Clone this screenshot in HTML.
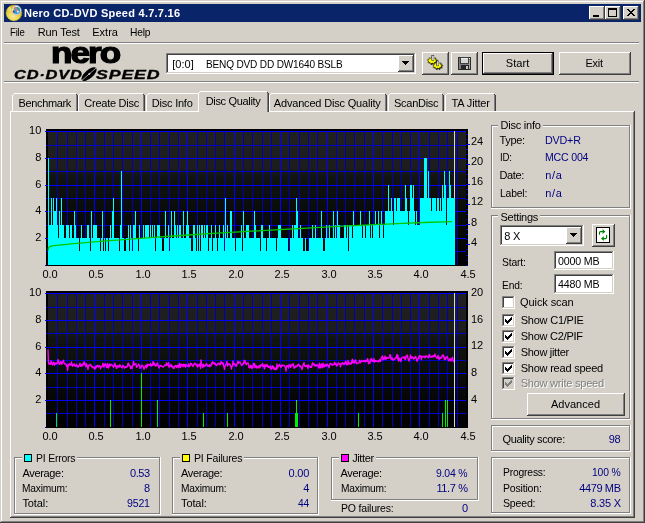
<!DOCTYPE html>
<html><head><meta charset="utf-8"><title>Nero CD-DVD Speed 4.7.7.16</title>
<style>
html,body{margin:0;padding:0;background:#d4d0c8;}
body{width:645px;height:523px;position:relative;overflow:hidden;font-family:"Liberation Sans",sans-serif;font-size:11px;}
#w{position:absolute;left:0;top:0;width:645px;height:523px;overflow:hidden;}
#w div,#w span,#w svg,#tx span{position:absolute;}
#tx{position:absolute;left:0;top:0;width:645px;height:523px;overflow:hidden;will-change:transform;}
.t{font:11px/13px "Liberation Sans",sans-serif;white-space:nowrap;}
.logo1{font:bold 29px/30px "Liberation Sans",sans-serif;letter-spacing:-1.6px;color:#000;-webkit-text-stroke:1.2px #000;transform-origin:0 0;transform:scaleX(1.21);white-space:nowrap;}
.logo2{font:italic bold 12.5px/16px "Liberation Sans",sans-serif;color:#000;transform-origin:0 0;letter-spacing:0.6px;-webkit-text-stroke:0.35px #000;white-space:nowrap;}
</style></head><body><div id="w">
<div style="left:0px;top:0px;width:645px;height:523px;background:#d4d0c8;"></div>
<div style="left:0px;top:0px;width:645px;height:1px;background:#d4d0c8;"></div>
<div style="left:0px;top:0px;width:1px;height:523px;background:#d4d0c8;"></div>
<div style="left:1px;top:1px;width:643px;height:1px;background:#fff;"></div>
<div style="left:1px;top:1px;width:1px;height:521px;background:#fff;"></div>
<div style="left:0px;top:522px;width:645px;height:1px;background:#404040;"></div>
<div style="left:644px;top:0px;width:1px;height:523px;background:#404040;"></div>
<div style="left:1px;top:521px;width:643px;height:1px;background:#808080;"></div>
<div style="left:643px;top:1px;width:1px;height:521px;background:#808080;"></div>
<div style="left:4px;top:4px;width:637px;height:18px;background:#0a246a;"></div>
<svg style="left:4px;top:4px" width="20" height="18" viewBox="4 4 20 18">
<defs><radialGradient id="gd" cx="0.45" cy="0.7" r="0.7"><stop offset="0" stop-color="#f6eaa8"/><stop offset="0.45" stop-color="#ecd848"/><stop offset="1" stop-color="#d0b420"/></radialGradient></defs>
<circle cx="13.9" cy="13" r="7.9" fill="url(#gd)" stroke="#c8ac20" stroke-width="0.6" stroke-dasharray="1.2 0.9"/>
<path d="M13.9 13 L7 9.5 A7.8 7.8 0 0 1 10 6.3 Z" fill="#f4e870" opacity="0.7"/>
<circle cx="16.4" cy="10.2" r="4.7" fill="#e4e4f0" stroke="#a8a8bc" stroke-width="0.6"/>
<circle cx="16.6" cy="10.4" r="3.5" fill="#2c9ee6"/>
<path d="M17.2 7 L19.6 8.2 L18.6 9.4 Z" fill="#30a030"/>
<path d="M13.2 10.2 L15 12.6 L13.8 13 L12.8 11.6 Z" fill="#a01818"/>
<path d="M15 7.4 L17.6 11.8" stroke="#ff7040" stroke-width="1.5" fill="none" stroke-linecap="round"/>
<circle cx="13.4" cy="9.4" r="0.8" fill="#f8e020"/>
<circle cx="17.9" cy="11.6" r="0.9" fill="#fff"/>
</svg>
<div style="left:589px;top:6px;width:16px;height:14px;background:#d4d0c8;"></div>
<div style="left:589px;top:6px;width:15px;height:1px;background:#fff;"></div>
<div style="left:589px;top:6px;width:1px;height:13px;background:#fff;"></div>
<div style="left:589px;top:19px;width:16px;height:1px;background:#404040;"></div>
<div style="left:604px;top:6px;width:1px;height:14px;background:#404040;"></div>
<div style="left:590px;top:18px;width:14px;height:1px;background:#808080;"></div>
<div style="left:603px;top:7px;width:1px;height:12px;background:#808080;"></div>
<div style="left:605px;top:6px;width:16px;height:14px;background:#d4d0c8;"></div>
<div style="left:605px;top:6px;width:15px;height:1px;background:#fff;"></div>
<div style="left:605px;top:6px;width:1px;height:13px;background:#fff;"></div>
<div style="left:605px;top:19px;width:16px;height:1px;background:#404040;"></div>
<div style="left:620px;top:6px;width:1px;height:14px;background:#404040;"></div>
<div style="left:606px;top:18px;width:14px;height:1px;background:#808080;"></div>
<div style="left:619px;top:7px;width:1px;height:12px;background:#808080;"></div>
<div style="left:623px;top:6px;width:16px;height:14px;background:#d4d0c8;"></div>
<div style="left:623px;top:6px;width:15px;height:1px;background:#fff;"></div>
<div style="left:623px;top:6px;width:1px;height:13px;background:#fff;"></div>
<div style="left:623px;top:19px;width:16px;height:1px;background:#404040;"></div>
<div style="left:638px;top:6px;width:1px;height:14px;background:#404040;"></div>
<div style="left:624px;top:18px;width:14px;height:1px;background:#808080;"></div>
<div style="left:637px;top:7px;width:1px;height:12px;background:#808080;"></div>
<div style="left:593px;top:15px;width:6px;height:2px;background:#000;"></div>
<div style="left:608px;top:8px;width:9px;height:9px;background:#000;"></div>
<div style="left:609px;top:10px;width:7px;height:6px;background:#d4d0c8;"></div>
<svg style="left:623px;top:6px" width="16" height="14" viewBox="0 0 16 14" shape-rendering="crispEdges">
<path d="M4 3h2v1h1v1h2v-1h1v-1h2v1h-1v1h-1v1h-1v1h1v1h1v1h1v1h-2v-1h-1v-1h-2v1h-1v1h-2v-1h1v-1h1v-1h1v-1h-1v-1h-1v-1h-1z" fill="#000"/></svg>
<div style="left:4px;top:42px;width:635px;height:1px;background:#808080;"></div>
<div style="left:4px;top:43px;width:635px;height:1px;background:#fff;"></div>
<svg style="left:78px;top:64px" width="22" height="20" viewBox="78 64 22 20">
<g transform="translate(0.6 0) rotate(-41 88.5 74.1)">
<ellipse cx="88.5" cy="74.1" rx="9.4" ry="4.1" fill="#000"/>
<path d="M78.2 74.1 H98.8" stroke="#d4d0c8" stroke-width="0.7" fill="none"/>
<ellipse cx="88.8" cy="74.1" rx="1.3" ry="0.8" fill="#d4d0c8"/>
</g>
</svg>
<div style="left:166px;top:53px;width:250px;height:21px;background:#fff;"></div>
<div style="left:166px;top:53px;width:250px;height:1px;background:#808080;"></div>
<div style="left:166px;top:53px;width:1px;height:21px;background:#808080;"></div>
<div style="left:167px;top:54px;width:248px;height:1px;background:#404040;"></div>
<div style="left:167px;top:54px;width:1px;height:19px;background:#404040;"></div>
<div style="left:166px;top:73px;width:250px;height:1px;background:#fff;"></div>
<div style="left:415px;top:53px;width:1px;height:21px;background:#fff;"></div>
<div style="left:167px;top:72px;width:248px;height:1px;background:#d4d0c8;"></div>
<div style="left:414px;top:54px;width:1px;height:19px;background:#d4d0c8;"></div>
<div style="left:398px;top:55px;width:16px;height:17px;background:#d4d0c8;"></div>
<div style="left:398px;top:55px;width:15px;height:1px;background:#fff;"></div>
<div style="left:398px;top:55px;width:1px;height:16px;background:#fff;"></div>
<div style="left:398px;top:71px;width:16px;height:1px;background:#404040;"></div>
<div style="left:413px;top:55px;width:1px;height:17px;background:#404040;"></div>
<div style="left:399px;top:70px;width:14px;height:1px;background:#808080;"></div>
<div style="left:412px;top:56px;width:1px;height:15px;background:#808080;"></div>
<div style="left:402px;top:61px;width:7px;height:1px;background:#000;"></div>
<div style="left:403px;top:62px;width:5px;height:1px;background:#000;"></div>
<div style="left:404px;top:63px;width:3px;height:1px;background:#000;"></div>
<div style="left:405px;top:64px;width:1px;height:1px;background:#000;"></div>
<div style="left:422px;top:52px;width:27px;height:23px;background:#d4d0c8;"></div>
<div style="left:422px;top:52px;width:26px;height:1px;background:#fff;"></div>
<div style="left:422px;top:52px;width:1px;height:22px;background:#fff;"></div>
<div style="left:422px;top:74px;width:27px;height:1px;background:#404040;"></div>
<div style="left:448px;top:52px;width:1px;height:23px;background:#404040;"></div>
<div style="left:423px;top:73px;width:25px;height:1px;background:#808080;"></div>
<div style="left:447px;top:53px;width:1px;height:21px;background:#808080;"></div>
<div style="left:451px;top:52px;width:27px;height:23px;background:#d4d0c8;"></div>
<div style="left:451px;top:52px;width:26px;height:1px;background:#fff;"></div>
<div style="left:451px;top:52px;width:1px;height:22px;background:#fff;"></div>
<div style="left:451px;top:74px;width:27px;height:1px;background:#404040;"></div>
<div style="left:477px;top:52px;width:1px;height:23px;background:#404040;"></div>
<div style="left:452px;top:73px;width:25px;height:1px;background:#808080;"></div>
<div style="left:476px;top:53px;width:1px;height:21px;background:#808080;"></div>
<svg style="left:424px;top:52px" width="24" height="22" viewBox="424 52 24 22">
<path d="M432.90 57.40 L434.13 58.81 L436.31 58.31 L436.02 59.97 L438.12 60.62 L436.45 61.76 L437.49 63.25 L435.22 63.33 L434.71 64.96 L432.90 63.95 L431.09 64.96 L430.58 63.33 L428.31 63.25 L429.35 61.76 L427.68 60.62 L429.78 59.97 L429.49 58.31 L431.67 58.81 Z" fill="#000"/>
<path d="M432.20 56.90 L433.39 58.24 L435.48 57.77 L435.20 59.34 L437.22 59.96 L435.62 61.04 L436.62 62.45 L434.43 62.53 L433.94 64.08 L432.20 63.12 L430.46 64.08 L429.97 62.53 L427.78 62.45 L428.78 61.04 L427.18 59.96 L429.20 59.34 L428.92 57.77 L431.01 58.24 Z" fill="#ffff00" stroke="#1a1a00" stroke-width="0.55"/>
<rect x="431.8" y="55.4" width="2.0" height="5.200000000000003" fill="#b8b8cc" stroke="#202028" stroke-width="0.6"/>
<rect x="432.6" y="55.8" width="0.9" height="4.600000000000003" fill="#f4f4ff"/>
<path d="M438.20 62.40 L439.43 63.81 L441.61 63.31 L441.32 64.97 L443.42 65.62 L441.75 66.76 L442.79 68.25 L440.52 68.33 L440.01 69.96 L438.20 68.95 L436.39 69.96 L435.88 68.33 L433.61 68.25 L434.65 66.76 L432.98 65.62 L435.08 64.97 L434.79 63.31 L436.97 63.81 Z" fill="#000"/>
<path d="M437.50 61.90 L438.69 63.24 L440.78 62.77 L440.50 64.34 L442.52 64.96 L440.92 66.04 L441.92 67.45 L439.73 67.53 L439.24 69.08 L437.50 68.12 L435.76 69.08 L435.27 67.53 L433.08 67.45 L434.08 66.04 L432.48 64.96 L434.50 64.34 L434.22 62.77 L436.31 63.24 Z" fill="#ffff00" stroke="#1a1a00" stroke-width="0.55"/>
<rect x="436.7" y="61.0" width="2.0" height="4.799999999999997" fill="#b8b8cc" stroke="#202028" stroke-width="0.6"/>
<rect x="437.5" y="61.4" width="0.9" height="4.1999999999999975" fill="#f4f4ff"/>
</svg>
<svg style="left:458px;top:57px" width="13" height="13" viewBox="458 57 13 13" shape-rendering="crispEdges">
<rect x="458" y="57" width="13" height="13" fill="#2c2c2c"/>
<rect x="459" y="58" width="11" height="11" fill="#7c7c7c"/>
<rect x="460" y="57" width="9" height="7" fill="#404040"/>
<rect x="461" y="58" width="7" height="5" fill="#d6d6d6"/>
<rect x="461" y="58" width="7" height="1" fill="#ececec"/>
<rect x="461" y="65" width="8" height="5" fill="#262626"/>
<rect x="466" y="66" width="2" height="3" fill="#c4c4c4"/>
<rect x="469" y="60" width="1" height="9" fill="#a8a8a8"/>
<rect x="469" y="58" width="1" height="1" fill="#fff"/>
</svg>
<div style="left:482px;top:52px;width:72px;height:23px;background:#000;"></div>
<div style="left:483px;top:53px;width:70px;height:21px;background:#d4d0c8;"></div>
<div style="left:483px;top:53px;width:69px;height:1px;background:#fff;"></div>
<div style="left:483px;top:53px;width:1px;height:20px;background:#fff;"></div>
<div style="left:483px;top:73px;width:70px;height:1px;background:#404040;"></div>
<div style="left:552px;top:53px;width:1px;height:21px;background:#404040;"></div>
<div style="left:484px;top:72px;width:68px;height:1px;background:#808080;"></div>
<div style="left:551px;top:54px;width:1px;height:19px;background:#808080;"></div>
<div style="left:559px;top:52px;width:72px;height:23px;background:#d4d0c8;"></div>
<div style="left:559px;top:52px;width:71px;height:1px;background:#fff;"></div>
<div style="left:559px;top:52px;width:1px;height:22px;background:#fff;"></div>
<div style="left:559px;top:74px;width:72px;height:1px;background:#404040;"></div>
<div style="left:630px;top:52px;width:1px;height:23px;background:#404040;"></div>
<div style="left:560px;top:73px;width:70px;height:1px;background:#808080;"></div>
<div style="left:629px;top:53px;width:1px;height:21px;background:#808080;"></div>
<div style="left:4px;top:81px;width:635px;height:1px;background:#808080;"></div>
<div style="left:4px;top:82px;width:635px;height:1px;background:#fff;"></div>
<div style="left:10px;top:111px;width:624px;height:1px;background:#fff;"></div>
<div style="left:10px;top:111px;width:1px;height:406px;background:#fff;"></div>
<div style="left:10px;top:517px;width:625px;height:1px;background:#404040;"></div>
<div style="left:634px;top:111px;width:1px;height:407px;background:#404040;"></div>
<div style="left:11px;top:516px;width:623px;height:1px;background:#808080;"></div>
<div style="left:633px;top:112px;width:1px;height:405px;background:#808080;"></div>
<div style="left:12px;top:93px;width:66px;height:18px;background:#d4d0c8;"></div>
<div style="left:12px;top:95px;width:1px;height:16px;background:#fff;"></div>
<div style="left:13px;top:94px;width:1px;height:1px;background:#fff;"></div>
<div style="left:14px;top:93px;width:62px;height:1px;background:#fff;"></div>
<div style="left:77px;top:95px;width:1px;height:16px;background:#404040;"></div>
<div style="left:76px;top:94px;width:1px;height:1px;background:#404040;"></div>
<div style="left:76px;top:95px;width:1px;height:16px;background:#808080;"></div>
<div style="left:78px;top:93px;width:67px;height:18px;background:#d4d0c8;"></div>
<div style="left:78px;top:95px;width:1px;height:16px;background:#fff;"></div>
<div style="left:79px;top:94px;width:1px;height:1px;background:#fff;"></div>
<div style="left:80px;top:93px;width:63px;height:1px;background:#fff;"></div>
<div style="left:144px;top:95px;width:1px;height:16px;background:#404040;"></div>
<div style="left:143px;top:94px;width:1px;height:1px;background:#404040;"></div>
<div style="left:143px;top:95px;width:1px;height:16px;background:#808080;"></div>
<div style="left:146px;top:93px;width:54px;height:18px;background:#d4d0c8;"></div>
<div style="left:146px;top:95px;width:1px;height:16px;background:#fff;"></div>
<div style="left:147px;top:94px;width:1px;height:1px;background:#fff;"></div>
<div style="left:148px;top:93px;width:50px;height:1px;background:#fff;"></div>
<div style="left:199px;top:95px;width:1px;height:16px;background:#404040;"></div>
<div style="left:198px;top:94px;width:1px;height:1px;background:#404040;"></div>
<div style="left:198px;top:95px;width:1px;height:16px;background:#808080;"></div>
<div style="left:269px;top:93px;width:118px;height:18px;background:#d4d0c8;"></div>
<div style="left:269px;top:95px;width:1px;height:16px;background:#fff;"></div>
<div style="left:270px;top:94px;width:1px;height:1px;background:#fff;"></div>
<div style="left:271px;top:93px;width:114px;height:1px;background:#fff;"></div>
<div style="left:386px;top:95px;width:1px;height:16px;background:#404040;"></div>
<div style="left:385px;top:94px;width:1px;height:1px;background:#404040;"></div>
<div style="left:385px;top:95px;width:1px;height:16px;background:#808080;"></div>
<div style="left:388px;top:93px;width:56px;height:18px;background:#d4d0c8;"></div>
<div style="left:388px;top:95px;width:1px;height:16px;background:#fff;"></div>
<div style="left:389px;top:94px;width:1px;height:1px;background:#fff;"></div>
<div style="left:390px;top:93px;width:52px;height:1px;background:#fff;"></div>
<div style="left:443px;top:95px;width:1px;height:16px;background:#404040;"></div>
<div style="left:442px;top:94px;width:1px;height:1px;background:#404040;"></div>
<div style="left:442px;top:95px;width:1px;height:16px;background:#808080;"></div>
<div style="left:445px;top:93px;width:51px;height:18px;background:#d4d0c8;"></div>
<div style="left:445px;top:95px;width:1px;height:16px;background:#fff;"></div>
<div style="left:446px;top:94px;width:1px;height:1px;background:#fff;"></div>
<div style="left:447px;top:93px;width:47px;height:1px;background:#fff;"></div>
<div style="left:495px;top:95px;width:1px;height:16px;background:#404040;"></div>
<div style="left:494px;top:94px;width:1px;height:1px;background:#404040;"></div>
<div style="left:494px;top:95px;width:1px;height:16px;background:#808080;"></div>
<div style="left:198px;top:91px;width:71px;height:21px;background:#d4d0c8;"></div>
<div style="left:198px;top:93px;width:1px;height:19px;background:#fff;"></div>
<div style="left:199px;top:92px;width:1px;height:1px;background:#fff;"></div>
<div style="left:200px;top:91px;width:67px;height:1px;background:#fff;"></div>
<div style="left:268px;top:93px;width:1px;height:19px;background:#404040;"></div>
<div style="left:267px;top:92px;width:1px;height:1px;background:#404040;"></div>
<div style="left:267px;top:93px;width:1px;height:19px;background:#808080;"></div>
<svg style="left:26px;top:123px" width="462" height="160" viewBox="26 123 462 160" shape-rendering="crispEdges">
<defs><linearGradient id="bg1" x1="0" y1="0" x2="0" y2="1"><stop offset="0" stop-color="#212121"/><stop offset="0.28" stop-color="#1c1d1c"/><stop offset="0.34" stop-color="#111411"/><stop offset="0.6" stop-color="#0a0c0a"/><stop offset="0.85" stop-color="#040504"/><stop offset="1" stop-color="#000"/></linearGradient></defs>
<rect x="46" y="129" width="422" height="136" fill="#000"/>
<rect x="48" y="131" width="418" height="133" fill="url(#bg1)"/>
<rect x="57" y="131" width="1" height="134" fill="#0000b8"/>
<rect x="67" y="131" width="1" height="134" fill="#0000b8"/>
<rect x="76" y="131" width="1" height="134" fill="#0000b8"/>
<rect x="85" y="131" width="1" height="134" fill="#0000b8"/>
<rect x="94" y="131" width="1" height="134" fill="#0000ff"/>
<rect x="104" y="131" width="1" height="134" fill="#0000b8"/>
<rect x="113" y="131" width="1" height="134" fill="#0000b8"/>
<rect x="122" y="131" width="1" height="134" fill="#0000b8"/>
<rect x="132" y="131" width="1" height="134" fill="#0000b8"/>
<rect x="141" y="131" width="1" height="134" fill="#0000ff"/>
<rect x="150" y="131" width="1" height="134" fill="#0000b8"/>
<rect x="159" y="131" width="1" height="134" fill="#0000b8"/>
<rect x="169" y="131" width="1" height="134" fill="#0000b8"/>
<rect x="178" y="131" width="1" height="134" fill="#0000b8"/>
<rect x="187" y="131" width="1" height="134" fill="#0000ff"/>
<rect x="197" y="131" width="1" height="134" fill="#0000b8"/>
<rect x="206" y="131" width="1" height="134" fill="#0000b8"/>
<rect x="215" y="131" width="1" height="134" fill="#0000b8"/>
<rect x="224" y="131" width="1" height="134" fill="#0000b8"/>
<rect x="234" y="131" width="1" height="134" fill="#0000ff"/>
<rect x="243" y="131" width="1" height="134" fill="#0000b8"/>
<rect x="252" y="131" width="1" height="134" fill="#0000b8"/>
<rect x="262" y="131" width="1" height="134" fill="#0000b8"/>
<rect x="271" y="131" width="1" height="134" fill="#0000b8"/>
<rect x="280" y="131" width="1" height="134" fill="#0000ff"/>
<rect x="289" y="131" width="1" height="134" fill="#0000b8"/>
<rect x="299" y="131" width="1" height="134" fill="#0000b8"/>
<rect x="308" y="131" width="1" height="134" fill="#0000b8"/>
<rect x="317" y="131" width="1" height="134" fill="#0000b8"/>
<rect x="327" y="131" width="1" height="134" fill="#0000ff"/>
<rect x="336" y="131" width="1" height="134" fill="#0000b8"/>
<rect x="345" y="131" width="1" height="134" fill="#0000b8"/>
<rect x="354" y="131" width="1" height="134" fill="#0000b8"/>
<rect x="364" y="131" width="1" height="134" fill="#0000b8"/>
<rect x="373" y="131" width="1" height="134" fill="#0000ff"/>
<rect x="382" y="131" width="1" height="134" fill="#0000b8"/>
<rect x="392" y="131" width="1" height="134" fill="#0000b8"/>
<rect x="401" y="131" width="1" height="134" fill="#0000b8"/>
<rect x="410" y="131" width="1" height="134" fill="#0000b8"/>
<rect x="419" y="131" width="1" height="134" fill="#0000ff"/>
<rect x="429" y="131" width="1" height="134" fill="#0000b8"/>
<rect x="438" y="131" width="1" height="134" fill="#0000b8"/>
<rect x="447" y="131" width="1" height="134" fill="#0000b8"/>
<rect x="457" y="131" width="1" height="134" fill="#0000b8"/>
<rect x="45" y="265" width="421" height="1" fill="#0000ff"/>
<rect x="46" y="251" width="420" height="1" fill="#0000c8"/>
<rect x="45" y="238" width="421" height="1" fill="#0000ff"/>
<rect x="46" y="225" width="420" height="1" fill="#0000c8"/>
<rect x="45" y="211" width="421" height="1" fill="#0000ff"/>
<rect x="46" y="198" width="420" height="1" fill="#0000c8"/>
<rect x="45" y="185" width="421" height="1" fill="#0000ff"/>
<rect x="46" y="171" width="420" height="1" fill="#0000c8"/>
<rect x="45" y="158" width="421" height="1" fill="#0000ff"/>
<rect x="46" y="145" width="420" height="1" fill="#0000c8"/>
<rect x="45" y="131" width="421" height="1" fill="#0000ff"/>
<rect x="454" y="131" width="1" height="134" fill="#d8d8d8"/>
<rect x="48" y="158" width="1" height="107" fill="#00ffff"/>
<rect x="49" y="225" width="2" height="40" fill="#00ffff"/>
<rect x="51" y="198" width="1" height="67" fill="#00ffff"/>
<rect x="52" y="225" width="1" height="40" fill="#00ffff"/>
<rect x="53" y="198" width="1" height="67" fill="#00ffff"/>
<rect x="54" y="211" width="2" height="54" fill="#00ffff"/>
<rect x="56" y="198" width="1" height="67" fill="#00ffff"/>
<rect x="57" y="225" width="1" height="40" fill="#00ffff"/>
<rect x="58" y="238" width="1" height="27" fill="#00ffff"/>
<rect x="59" y="211" width="1" height="54" fill="#00ffff"/>
<rect x="60" y="225" width="1" height="40" fill="#00ffff"/>
<rect x="61" y="198" width="1" height="67" fill="#00ffff"/>
<rect x="62" y="225" width="2" height="40" fill="#00ffff"/>
<rect x="64" y="238" width="2" height="27" fill="#00ffff"/>
<rect x="66" y="225" width="3" height="40" fill="#00ffff"/>
<rect x="69" y="238" width="1" height="27" fill="#00ffff"/>
<rect x="70" y="225" width="2" height="40" fill="#00ffff"/>
<rect x="72" y="238" width="2" height="27" fill="#00ffff"/>
<rect x="74" y="211" width="1" height="54" fill="#00ffff"/>
<rect x="75" y="225" width="1" height="40" fill="#00ffff"/>
<rect x="76" y="238" width="3" height="27" fill="#00ffff"/>
<rect x="79" y="251" width="1" height="14" fill="#00ffff"/>
<rect x="80" y="238" width="1" height="27" fill="#00ffff"/>
<rect x="81" y="225" width="1" height="40" fill="#00ffff"/>
<rect x="82" y="238" width="5" height="27" fill="#00ffff"/>
<rect x="87" y="225" width="2" height="40" fill="#00ffff"/>
<rect x="89" y="238" width="1" height="27" fill="#00ffff"/>
<rect x="90" y="251" width="1" height="14" fill="#00ffff"/>
<rect x="91" y="211" width="1" height="54" fill="#00ffff"/>
<rect x="92" y="238" width="1" height="27" fill="#00ffff"/>
<rect x="93" y="225" width="4" height="40" fill="#00ffff"/>
<rect x="97" y="238" width="3" height="27" fill="#00ffff"/>
<rect x="100" y="251" width="1" height="14" fill="#00ffff"/>
<rect x="101" y="238" width="1" height="27" fill="#00ffff"/>
<rect x="102" y="211" width="1" height="54" fill="#00ffff"/>
<rect x="103" y="251" width="1" height="14" fill="#00ffff"/>
<rect x="104" y="238" width="1" height="27" fill="#00ffff"/>
<rect x="105" y="251" width="1" height="14" fill="#00ffff"/>
<rect x="106" y="238" width="2" height="27" fill="#00ffff"/>
<rect x="108" y="251" width="1" height="14" fill="#00ffff"/>
<rect x="109" y="238" width="1" height="27" fill="#00ffff"/>
<rect x="110" y="225" width="1" height="40" fill="#00ffff"/>
<rect x="111" y="238" width="1" height="27" fill="#00ffff"/>
<rect x="112" y="211" width="1" height="54" fill="#00ffff"/>
<rect x="113" y="198" width="1" height="67" fill="#00ffff"/>
<rect x="114" y="238" width="5" height="27" fill="#00ffff"/>
<rect x="119" y="251" width="1" height="14" fill="#00ffff"/>
<rect x="120" y="225" width="1" height="40" fill="#00ffff"/>
<rect x="121" y="171" width="1" height="94" fill="#00ffff"/>
<rect x="122" y="238" width="2" height="27" fill="#00ffff"/>
<rect x="124" y="251" width="2" height="14" fill="#00ffff"/>
<rect x="126" y="238" width="2" height="27" fill="#00ffff"/>
<rect x="128" y="225" width="1" height="40" fill="#00ffff"/>
<rect x="129" y="251" width="1" height="14" fill="#00ffff"/>
<rect x="130" y="225" width="1" height="40" fill="#00ffff"/>
<rect x="131" y="238" width="1" height="27" fill="#00ffff"/>
<rect x="132" y="251" width="1" height="14" fill="#00ffff"/>
<rect x="133" y="225" width="2" height="40" fill="#00ffff"/>
<rect x="135" y="211" width="1" height="54" fill="#00ffff"/>
<rect x="136" y="238" width="2" height="27" fill="#00ffff"/>
<rect x="138" y="251" width="1" height="14" fill="#00ffff"/>
<rect x="139" y="225" width="1" height="40" fill="#00ffff"/>
<rect x="140" y="238" width="3" height="27" fill="#00ffff"/>
<rect x="143" y="225" width="1" height="40" fill="#00ffff"/>
<rect x="144" y="238" width="1" height="27" fill="#00ffff"/>
<rect x="145" y="225" width="4" height="40" fill="#00ffff"/>
<rect x="149" y="238" width="1" height="27" fill="#00ffff"/>
<rect x="150" y="225" width="1" height="40" fill="#00ffff"/>
<rect x="151" y="238" width="1" height="27" fill="#00ffff"/>
<rect x="152" y="225" width="1" height="40" fill="#00ffff"/>
<rect x="153" y="238" width="1" height="27" fill="#00ffff"/>
<rect x="154" y="225" width="1" height="40" fill="#00ffff"/>
<rect x="155" y="251" width="1" height="14" fill="#00ffff"/>
<rect x="156" y="238" width="1" height="27" fill="#00ffff"/>
<rect x="157" y="225" width="3" height="40" fill="#00ffff"/>
<rect x="160" y="238" width="2" height="27" fill="#00ffff"/>
<rect x="162" y="251" width="2" height="14" fill="#00ffff"/>
<rect x="164" y="238" width="1" height="27" fill="#00ffff"/>
<rect x="165" y="211" width="1" height="54" fill="#00ffff"/>
<rect x="166" y="238" width="2" height="27" fill="#00ffff"/>
<rect x="168" y="225" width="1" height="40" fill="#00ffff"/>
<rect x="169" y="251" width="1" height="14" fill="#00ffff"/>
<rect x="170" y="238" width="1" height="27" fill="#00ffff"/>
<rect x="171" y="211" width="1" height="54" fill="#00ffff"/>
<rect x="172" y="238" width="2" height="27" fill="#00ffff"/>
<rect x="174" y="211" width="1" height="54" fill="#00ffff"/>
<rect x="175" y="225" width="1" height="40" fill="#00ffff"/>
<rect x="176" y="238" width="1" height="27" fill="#00ffff"/>
<rect x="177" y="225" width="1" height="40" fill="#00ffff"/>
<rect x="178" y="238" width="1" height="27" fill="#00ffff"/>
<rect x="179" y="225" width="2" height="40" fill="#00ffff"/>
<rect x="181" y="238" width="2" height="27" fill="#00ffff"/>
<rect x="183" y="211" width="1" height="54" fill="#00ffff"/>
<rect x="184" y="238" width="2" height="27" fill="#00ffff"/>
<rect x="186" y="225" width="1" height="40" fill="#00ffff"/>
<rect x="187" y="211" width="1" height="54" fill="#00ffff"/>
<rect x="188" y="225" width="1" height="40" fill="#00ffff"/>
<rect x="189" y="238" width="2" height="27" fill="#00ffff"/>
<rect x="191" y="251" width="2" height="14" fill="#00ffff"/>
<rect x="193" y="225" width="2" height="40" fill="#00ffff"/>
<rect x="195" y="238" width="1" height="27" fill="#00ffff"/>
<rect x="196" y="251" width="1" height="14" fill="#00ffff"/>
<rect x="197" y="225" width="1" height="40" fill="#00ffff"/>
<rect x="198" y="251" width="1" height="14" fill="#00ffff"/>
<rect x="199" y="225" width="1" height="40" fill="#00ffff"/>
<rect x="200" y="251" width="1" height="14" fill="#00ffff"/>
<rect x="201" y="225" width="2" height="40" fill="#00ffff"/>
<rect x="203" y="238" width="1" height="27" fill="#00ffff"/>
<rect x="204" y="225" width="1" height="40" fill="#00ffff"/>
<rect x="205" y="238" width="1" height="27" fill="#00ffff"/>
<rect x="206" y="225" width="2" height="40" fill="#00ffff"/>
<rect x="208" y="251" width="1" height="14" fill="#00ffff"/>
<rect x="209" y="238" width="2" height="27" fill="#00ffff"/>
<rect x="211" y="225" width="1" height="40" fill="#00ffff"/>
<rect x="212" y="251" width="1" height="14" fill="#00ffff"/>
<rect x="213" y="238" width="2" height="27" fill="#00ffff"/>
<rect x="215" y="225" width="1" height="40" fill="#00ffff"/>
<rect x="216" y="238" width="1" height="27" fill="#00ffff"/>
<rect x="217" y="251" width="1" height="14" fill="#00ffff"/>
<rect x="218" y="238" width="1" height="27" fill="#00ffff"/>
<rect x="219" y="225" width="1" height="40" fill="#00ffff"/>
<rect x="220" y="238" width="3" height="27" fill="#00ffff"/>
<rect x="223" y="225" width="1" height="40" fill="#00ffff"/>
<rect x="224" y="251" width="1" height="14" fill="#00ffff"/>
<rect x="225" y="198" width="1" height="67" fill="#00ffff"/>
<rect x="226" y="238" width="1" height="27" fill="#00ffff"/>
<rect x="227" y="225" width="1" height="40" fill="#00ffff"/>
<rect x="228" y="238" width="2" height="27" fill="#00ffff"/>
<rect x="230" y="211" width="2" height="54" fill="#00ffff"/>
<rect x="232" y="238" width="3" height="27" fill="#00ffff"/>
<rect x="235" y="251" width="1" height="14" fill="#00ffff"/>
<rect x="236" y="238" width="5" height="27" fill="#00ffff"/>
<rect x="241" y="225" width="1" height="40" fill="#00ffff"/>
<rect x="242" y="251" width="1" height="14" fill="#00ffff"/>
<rect x="243" y="211" width="1" height="54" fill="#00ffff"/>
<rect x="244" y="238" width="2" height="27" fill="#00ffff"/>
<rect x="246" y="225" width="3" height="40" fill="#00ffff"/>
<rect x="249" y="238" width="5" height="27" fill="#00ffff"/>
<rect x="254" y="211" width="1" height="54" fill="#00ffff"/>
<rect x="255" y="225" width="1" height="40" fill="#00ffff"/>
<rect x="256" y="238" width="4" height="27" fill="#00ffff"/>
<rect x="260" y="251" width="1" height="14" fill="#00ffff"/>
<rect x="261" y="225" width="2" height="40" fill="#00ffff"/>
<rect x="263" y="238" width="3" height="27" fill="#00ffff"/>
<rect x="266" y="251" width="1" height="14" fill="#00ffff"/>
<rect x="267" y="238" width="2" height="27" fill="#00ffff"/>
<rect x="269" y="225" width="1" height="40" fill="#00ffff"/>
<rect x="270" y="238" width="6" height="27" fill="#00ffff"/>
<rect x="276" y="251" width="1" height="14" fill="#00ffff"/>
<rect x="277" y="238" width="1" height="27" fill="#00ffff"/>
<rect x="278" y="225" width="3" height="40" fill="#00ffff"/>
<rect x="281" y="238" width="7" height="27" fill="#00ffff"/>
<rect x="288" y="251" width="2" height="14" fill="#00ffff"/>
<rect x="290" y="238" width="2" height="27" fill="#00ffff"/>
<rect x="292" y="225" width="1" height="40" fill="#00ffff"/>
<rect x="293" y="238" width="1" height="27" fill="#00ffff"/>
<rect x="294" y="225" width="2" height="40" fill="#00ffff"/>
<rect x="296" y="198" width="1" height="67" fill="#00ffff"/>
<rect x="297" y="211" width="1" height="54" fill="#00ffff"/>
<rect x="298" y="238" width="2" height="27" fill="#00ffff"/>
<rect x="300" y="225" width="1" height="40" fill="#00ffff"/>
<rect x="301" y="238" width="2" height="27" fill="#00ffff"/>
<rect x="303" y="251" width="2" height="14" fill="#00ffff"/>
<rect x="305" y="238" width="1" height="27" fill="#00ffff"/>
<rect x="306" y="251" width="3" height="14" fill="#00ffff"/>
<rect x="309" y="238" width="3" height="27" fill="#00ffff"/>
<rect x="312" y="225" width="1" height="40" fill="#00ffff"/>
<rect x="313" y="238" width="2" height="27" fill="#00ffff"/>
<rect x="315" y="225" width="1" height="40" fill="#00ffff"/>
<rect x="316" y="238" width="5" height="27" fill="#00ffff"/>
<rect x="321" y="211" width="1" height="54" fill="#00ffff"/>
<rect x="322" y="238" width="1" height="27" fill="#00ffff"/>
<rect x="323" y="251" width="2" height="14" fill="#00ffff"/>
<rect x="325" y="238" width="1" height="27" fill="#00ffff"/>
<rect x="326" y="225" width="1" height="40" fill="#00ffff"/>
<rect x="327" y="238" width="2" height="27" fill="#00ffff"/>
<rect x="329" y="225" width="1" height="40" fill="#00ffff"/>
<rect x="330" y="238" width="3" height="27" fill="#00ffff"/>
<rect x="333" y="211" width="1" height="54" fill="#00ffff"/>
<rect x="334" y="238" width="1" height="27" fill="#00ffff"/>
<rect x="335" y="225" width="1" height="40" fill="#00ffff"/>
<rect x="336" y="238" width="1" height="27" fill="#00ffff"/>
<rect x="337" y="211" width="1" height="54" fill="#00ffff"/>
<rect x="338" y="225" width="2" height="40" fill="#00ffff"/>
<rect x="340" y="238" width="4" height="27" fill="#00ffff"/>
<rect x="344" y="225" width="2" height="40" fill="#00ffff"/>
<rect x="346" y="238" width="1" height="27" fill="#00ffff"/>
<rect x="347" y="225" width="1" height="40" fill="#00ffff"/>
<rect x="348" y="251" width="1" height="14" fill="#00ffff"/>
<rect x="349" y="225" width="3" height="40" fill="#00ffff"/>
<rect x="352" y="238" width="1" height="27" fill="#00ffff"/>
<rect x="353" y="211" width="1" height="54" fill="#00ffff"/>
<rect x="354" y="225" width="6" height="40" fill="#00ffff"/>
<rect x="360" y="211" width="1" height="54" fill="#00ffff"/>
<rect x="361" y="225" width="1" height="40" fill="#00ffff"/>
<rect x="362" y="238" width="1" height="27" fill="#00ffff"/>
<rect x="363" y="225" width="2" height="40" fill="#00ffff"/>
<rect x="365" y="238" width="1" height="27" fill="#00ffff"/>
<rect x="366" y="225" width="3" height="40" fill="#00ffff"/>
<rect x="369" y="211" width="1" height="54" fill="#00ffff"/>
<rect x="370" y="238" width="1" height="27" fill="#00ffff"/>
<rect x="371" y="225" width="1" height="40" fill="#00ffff"/>
<rect x="372" y="238" width="1" height="27" fill="#00ffff"/>
<rect x="373" y="225" width="2" height="40" fill="#00ffff"/>
<rect x="375" y="211" width="1" height="54" fill="#00ffff"/>
<rect x="376" y="225" width="2" height="40" fill="#00ffff"/>
<rect x="378" y="211" width="1" height="54" fill="#00ffff"/>
<rect x="379" y="238" width="1" height="27" fill="#00ffff"/>
<rect x="380" y="225" width="1" height="40" fill="#00ffff"/>
<rect x="381" y="211" width="1" height="54" fill="#00ffff"/>
<rect x="382" y="225" width="1" height="40" fill="#00ffff"/>
<rect x="383" y="238" width="1" height="27" fill="#00ffff"/>
<rect x="384" y="225" width="1" height="40" fill="#00ffff"/>
<rect x="385" y="211" width="3" height="54" fill="#00ffff"/>
<rect x="388" y="185" width="1" height="80" fill="#00ffff"/>
<rect x="389" y="211" width="2" height="54" fill="#00ffff"/>
<rect x="391" y="198" width="1" height="67" fill="#00ffff"/>
<rect x="392" y="211" width="1" height="54" fill="#00ffff"/>
<rect x="393" y="225" width="1" height="40" fill="#00ffff"/>
<rect x="394" y="198" width="2" height="67" fill="#00ffff"/>
<rect x="396" y="211" width="1" height="54" fill="#00ffff"/>
<rect x="397" y="198" width="3" height="67" fill="#00ffff"/>
<rect x="400" y="211" width="5" height="54" fill="#00ffff"/>
<rect x="405" y="185" width="1" height="80" fill="#00ffff"/>
<rect x="406" y="198" width="1" height="67" fill="#00ffff"/>
<rect x="407" y="211" width="1" height="54" fill="#00ffff"/>
<rect x="408" y="225" width="1" height="40" fill="#00ffff"/>
<rect x="409" y="211" width="1" height="54" fill="#00ffff"/>
<rect x="410" y="185" width="2" height="80" fill="#00ffff"/>
<rect x="412" y="198" width="1" height="67" fill="#00ffff"/>
<rect x="413" y="185" width="1" height="80" fill="#00ffff"/>
<rect x="414" y="211" width="1" height="54" fill="#00ffff"/>
<rect x="415" y="225" width="1" height="40" fill="#00ffff"/>
<rect x="416" y="211" width="1" height="54" fill="#00ffff"/>
<rect x="417" y="225" width="3" height="40" fill="#00ffff"/>
<rect x="420" y="198" width="4" height="67" fill="#00ffff"/>
<rect x="424" y="158" width="3" height="107" fill="#00ffff"/>
<rect x="427" y="198" width="1" height="67" fill="#00ffff"/>
<rect x="428" y="171" width="1" height="94" fill="#00ffff"/>
<rect x="429" y="198" width="2" height="67" fill="#00ffff"/>
<rect x="431" y="211" width="1" height="54" fill="#00ffff"/>
<rect x="432" y="198" width="4" height="67" fill="#00ffff"/>
<rect x="436" y="211" width="1" height="54" fill="#00ffff"/>
<rect x="437" y="198" width="2" height="67" fill="#00ffff"/>
<rect x="439" y="211" width="1" height="54" fill="#00ffff"/>
<rect x="440" y="198" width="1" height="67" fill="#00ffff"/>
<rect x="441" y="211" width="1" height="54" fill="#00ffff"/>
<rect x="442" y="185" width="1" height="80" fill="#00ffff"/>
<rect x="443" y="198" width="1" height="67" fill="#00ffff"/>
<rect x="444" y="171" width="1" height="94" fill="#00ffff"/>
<rect x="445" y="185" width="1" height="80" fill="#00ffff"/>
<rect x="446" y="225" width="1" height="40" fill="#00ffff"/>
<rect x="447" y="198" width="2" height="67" fill="#00ffff"/>
<rect x="449" y="171" width="1" height="94" fill="#00ffff"/>
<rect x="450" y="185" width="1" height="80" fill="#00ffff"/>
<rect x="451" y="198" width="4" height="67" fill="#00ffff"/>
<rect x="46" y="265" width="422" height="1" fill="#000"/>
<rect x="466" y="265" width="2" height="1" fill="#0000c0"/>
<rect x="466" y="260" width="2" height="1" fill="#0000c0"/>
<rect x="466" y="255" width="2" height="1" fill="#0000c0"/>
<rect x="466" y="249" width="2" height="1" fill="#0000c0"/>
<rect x="466" y="244" width="4" height="1" fill="#0000f0"/>
<rect x="466" y="239" width="2" height="1" fill="#0000c0"/>
<rect x="466" y="234" width="2" height="1" fill="#0000c0"/>
<rect x="466" y="229" width="2" height="1" fill="#0000c0"/>
<rect x="466" y="224" width="4" height="1" fill="#0000f0"/>
<rect x="466" y="219" width="2" height="1" fill="#0000c0"/>
<rect x="466" y="214" width="2" height="1" fill="#0000c0"/>
<rect x="466" y="209" width="2" height="1" fill="#0000c0"/>
<rect x="466" y="204" width="4" height="1" fill="#0000f0"/>
<rect x="466" y="199" width="2" height="1" fill="#0000c0"/>
<rect x="466" y="194" width="2" height="1" fill="#0000c0"/>
<rect x="466" y="189" width="2" height="1" fill="#0000c0"/>
<rect x="466" y="184" width="4" height="1" fill="#0000f0"/>
<rect x="466" y="179" width="2" height="1" fill="#0000c0"/>
<rect x="466" y="174" width="2" height="1" fill="#0000c0"/>
<rect x="466" y="169" width="2" height="1" fill="#0000c0"/>
<rect x="466" y="164" width="4" height="1" fill="#0000f0"/>
<rect x="466" y="159" width="2" height="1" fill="#0000c0"/>
<rect x="466" y="154" width="2" height="1" fill="#0000c0"/>
<rect x="466" y="149" width="2" height="1" fill="#0000c0"/>
<rect x="466" y="144" width="4" height="1" fill="#0000f0"/>
<rect x="466" y="139" width="2" height="1" fill="#0000c0"/>
<rect x="466" y="134" width="2" height="1" fill="#0000c0"/>
<polyline shape-rendering="auto" fill="none" stroke="#00c800" stroke-width="1.3" points="48,250.5 48.6,247.5 50,246.2 51,246.6 52,245.9 71,243.9 100,241.3 127,239.3 154,237.4 181,235.5 208,233.6 235,232.1 262,230.6 289,229.1 316,227.7 343,226.2 370,224.9 397,223.6 424,222.5 452,221.6"/>
</svg>
<svg style="left:26px;top:285px" width="462" height="160" viewBox="26 285 462 160" shape-rendering="crispEdges">
<defs><linearGradient id="bg2" x1="0" y1="0" x2="0" y2="1"><stop offset="0" stop-color="#212121"/><stop offset="0.28" stop-color="#1c1d1c"/><stop offset="0.34" stop-color="#111411"/><stop offset="0.6" stop-color="#0a0c0a"/><stop offset="0.85" stop-color="#040504"/><stop offset="1" stop-color="#000"/></linearGradient></defs>
<rect x="46" y="291" width="422" height="136" fill="#000"/>
<rect x="48" y="293" width="418" height="133" fill="url(#bg2)"/>
<rect x="57" y="293" width="1" height="134" fill="#0000b8"/>
<rect x="67" y="293" width="1" height="134" fill="#0000b8"/>
<rect x="76" y="293" width="1" height="134" fill="#0000b8"/>
<rect x="85" y="293" width="1" height="134" fill="#0000b8"/>
<rect x="94" y="293" width="1" height="134" fill="#0000ff"/>
<rect x="104" y="293" width="1" height="134" fill="#0000b8"/>
<rect x="113" y="293" width="1" height="134" fill="#0000b8"/>
<rect x="122" y="293" width="1" height="134" fill="#0000b8"/>
<rect x="132" y="293" width="1" height="134" fill="#0000b8"/>
<rect x="141" y="293" width="1" height="134" fill="#0000ff"/>
<rect x="150" y="293" width="1" height="134" fill="#0000b8"/>
<rect x="159" y="293" width="1" height="134" fill="#0000b8"/>
<rect x="169" y="293" width="1" height="134" fill="#0000b8"/>
<rect x="178" y="293" width="1" height="134" fill="#0000b8"/>
<rect x="187" y="293" width="1" height="134" fill="#0000ff"/>
<rect x="197" y="293" width="1" height="134" fill="#0000b8"/>
<rect x="206" y="293" width="1" height="134" fill="#0000b8"/>
<rect x="215" y="293" width="1" height="134" fill="#0000b8"/>
<rect x="224" y="293" width="1" height="134" fill="#0000b8"/>
<rect x="234" y="293" width="1" height="134" fill="#0000ff"/>
<rect x="243" y="293" width="1" height="134" fill="#0000b8"/>
<rect x="252" y="293" width="1" height="134" fill="#0000b8"/>
<rect x="262" y="293" width="1" height="134" fill="#0000b8"/>
<rect x="271" y="293" width="1" height="134" fill="#0000b8"/>
<rect x="280" y="293" width="1" height="134" fill="#0000ff"/>
<rect x="289" y="293" width="1" height="134" fill="#0000b8"/>
<rect x="299" y="293" width="1" height="134" fill="#0000b8"/>
<rect x="308" y="293" width="1" height="134" fill="#0000b8"/>
<rect x="317" y="293" width="1" height="134" fill="#0000b8"/>
<rect x="327" y="293" width="1" height="134" fill="#0000ff"/>
<rect x="336" y="293" width="1" height="134" fill="#0000b8"/>
<rect x="345" y="293" width="1" height="134" fill="#0000b8"/>
<rect x="354" y="293" width="1" height="134" fill="#0000b8"/>
<rect x="364" y="293" width="1" height="134" fill="#0000b8"/>
<rect x="373" y="293" width="1" height="134" fill="#0000ff"/>
<rect x="382" y="293" width="1" height="134" fill="#0000b8"/>
<rect x="392" y="293" width="1" height="134" fill="#0000b8"/>
<rect x="401" y="293" width="1" height="134" fill="#0000b8"/>
<rect x="410" y="293" width="1" height="134" fill="#0000b8"/>
<rect x="419" y="293" width="1" height="134" fill="#0000ff"/>
<rect x="429" y="293" width="1" height="134" fill="#0000b8"/>
<rect x="438" y="293" width="1" height="134" fill="#0000b8"/>
<rect x="447" y="293" width="1" height="134" fill="#0000b8"/>
<rect x="457" y="293" width="1" height="134" fill="#0000b8"/>
<rect x="45" y="427" width="421" height="1" fill="#0000ff"/>
<rect x="46" y="413" width="420" height="1" fill="#0000c8"/>
<rect x="45" y="400" width="421" height="1" fill="#0000ff"/>
<rect x="46" y="387" width="420" height="1" fill="#0000c8"/>
<rect x="45" y="373" width="421" height="1" fill="#0000ff"/>
<rect x="46" y="360" width="420" height="1" fill="#0000c8"/>
<rect x="45" y="347" width="421" height="1" fill="#0000ff"/>
<rect x="46" y="333" width="420" height="1" fill="#0000c8"/>
<rect x="45" y="320" width="421" height="1" fill="#0000ff"/>
<rect x="46" y="307" width="420" height="1" fill="#0000c8"/>
<rect x="45" y="293" width="421" height="1" fill="#0000ff"/>
<rect x="454" y="293" width="1" height="134" fill="#d8d8d8"/>
<rect x="56" y="413" width="1" height="14" fill="#00f000"/>
<rect x="110" y="400" width="1" height="27" fill="#00f000"/>
<rect x="141" y="373" width="1" height="54" fill="#00f000"/>
<rect x="157" y="400" width="1" height="27" fill="#00f000"/>
<rect x="203" y="413" width="1" height="14" fill="#00f000"/>
<rect x="227" y="413" width="1" height="14" fill="#00f000"/>
<rect x="295" y="413" width="1" height="14" fill="#00f000"/>
<rect x="296" y="400" width="1" height="27" fill="#00f000"/>
<rect x="297" y="413" width="1" height="14" fill="#00f000"/>
<rect x="358" y="413" width="1" height="14" fill="#00f000"/>
<rect x="442" y="413" width="1" height="14" fill="#00f000"/>
<rect x="445" y="400" width="1" height="27" fill="#00f000"/>
<rect x="447" y="400" width="1" height="27" fill="#00f000"/>
<rect x="46" y="427" width="422" height="1" fill="#000"/>
<polyline shape-rendering="auto" fill="none" stroke="#ff00ff" stroke-width="1.35" stroke-linejoin="round" points="48,349.5 48.4,362 49.0,364.2 49.5,363.2 50.0,363.9 50.5,364.4 51.0,360.8 51.5,362.4 52.0,363.5 52.5,365.0 53.0,363.7 53.5,362.2 54.0,363.2 54.5,365.0 55.0,362.7 55.5,363.9 56.0,364.2 56.5,363.2 57.0,362.8 57.5,363.4 58.0,359.6 58.5,360.6 59.0,363.3 59.5,364.4 60.0,363.6 60.5,362.5 61.0,361.5 61.5,364.2 62.0,364.1 62.5,362.0 63.0,361.4 63.5,360.3 64.0,362.9 64.5,363.8 65.0,363.7 65.5,363.9 66.0,364.7 66.5,366.3 67.0,364.8 67.5,370.2 68.0,367.2 68.5,364.5 69.0,365.2 69.5,363.7 70.0,364.8 70.5,364.2 71.0,365.1 71.5,362.0 72.0,364.7 72.5,366.3 73.0,364.8 73.5,365.2 74.0,363.8 74.5,364.4 75.0,366.1 75.5,366.4 76.0,365.3 76.5,364.4 77.0,366.3 77.5,366.0 78.0,367.3 78.5,365.9 79.0,365.6 79.5,365.6 80.0,363.1 80.5,366.4 81.0,364.7 81.5,364.6 82.0,366.4 82.5,364.6 83.0,363.8 83.5,364.8 84.0,362.0 84.5,362.1 85.0,364.6 85.5,365.6 86.0,366.8 86.5,363.7 87.0,365.6 87.5,366.6 88.0,369.4 88.5,365.8 89.0,365.3 89.5,365.3 90.0,364.4 90.5,364.4 91.0,365.0 91.5,366.9 92.0,366.3 92.5,366.3 93.0,367.7 93.5,368.1 94.0,367.3 94.5,368.6 95.0,369.0 95.5,366.3 96.0,368.0 96.5,365.9 97.0,366.5 97.5,365.4 98.0,366.6 98.5,367.0 99.0,365.5 99.5,366.0 100.0,366.0 100.5,368.8 101.0,366.6 101.5,366.7 102.0,366.7 102.5,365.5 103.0,363.3 103.5,365.4 104.0,367.2 104.5,364.4 105.0,365.3 105.5,363.8 106.0,365.3 106.5,367.3 107.0,367.6 107.5,363.7 108.0,366.4 108.5,368.0 109.0,366.5 109.5,364.0 110.0,365.9 110.5,365.8 111.0,364.3 111.5,364.8 112.0,364.8 112.5,365.8 113.0,365.9 113.5,367.4 114.0,366.0 114.5,364.9 115.0,363.3 115.5,366.5 116.0,366.0 116.5,368.4 117.0,368.0 117.5,365.7 118.0,366.2 118.5,365.9 119.0,367.3 119.5,365.0 120.0,364.9 120.5,365.8 121.0,367.0 121.5,367.0 122.0,367.9 122.5,366.6 123.0,365.3 123.5,366.0 124.0,367.0 124.5,368.1 125.0,367.1 125.5,366.6 126.0,367.4 126.5,367.4 127.0,366.8 127.5,365.9 128.0,363.2 128.5,363.2 129.0,365.5 129.5,365.2 130.0,365.8 130.5,368.5 131.0,367.2 131.5,366.5 132.0,368.5 132.5,365.9 133.0,365.1 133.5,361.3 134.0,364.8 134.5,365.0 135.0,364.0 135.5,364.3 136.0,363.8 136.5,367.3 137.0,366.6 137.5,366.4 138.0,365.7 138.5,364.1 139.0,364.9 139.5,365.2 140.0,368.3 140.5,367.8 141.0,367.0 141.5,365.7 142.0,365.1 142.5,365.8 143.0,365.8 143.5,367.8 144.0,369.3 144.5,368.3 145.0,366.9 145.5,365.4 146.0,366.5 146.5,367.8 147.0,364.3 147.5,366.5 148.0,364.5 148.5,364.4 149.0,365.0 149.5,364.7 150.0,365.3 150.5,363.4 151.0,366.0 151.5,366.1 152.0,364.4 152.5,365.3 153.0,361.7 153.5,362.3 154.0,365.1 154.5,363.2 155.0,364.5 155.5,366.0 156.0,365.6 156.5,365.8 157.0,363.6 157.5,362.9 158.0,365.0 158.5,366.6 159.0,368.0 159.5,366.3 160.0,365.5 160.5,365.5 161.0,366.2 161.5,365.6 162.0,366.5 162.5,366.7 163.0,367.1 163.5,366.8 164.0,366.1 164.5,365.2 165.0,365.0 165.5,365.2 166.0,365.5 166.5,362.9 167.0,364.7 167.5,364.2 168.0,365.6 168.5,362.7 169.0,367.2 169.5,367.0 170.0,365.7 170.5,366.1 171.0,364.2 171.5,366.9 172.0,366.0 172.5,365.9 173.0,368.1 173.5,368.0 174.0,368.6 174.5,366.2 175.0,366.3 175.5,365.6 176.0,365.5 176.5,367.6 177.0,366.0 177.5,366.9 178.0,365.0 178.5,367.3 179.0,367.8 179.5,363.4 180.0,364.2 180.5,367.3 181.0,365.9 181.5,364.3 182.0,364.8 182.5,365.5 183.0,366.8 183.5,364.2 184.0,364.4 184.5,366.0 185.0,364.5 185.5,367.2 186.0,364.4 186.5,365.9 187.0,365.8 187.5,365.9 188.0,366.3 188.5,363.8 189.0,366.8 189.5,365.5 190.0,366.1 190.5,363.1 191.0,364.4 191.5,363.7 192.0,364.9 192.5,365.3 193.0,366.6 193.5,365.6 194.0,364.0 194.5,363.3 195.0,363.5 195.5,364.1 196.0,364.5 196.5,365.9 197.0,364.2 197.5,367.0 198.0,366.4 198.5,364.9 199.0,365.0 199.5,365.8 200.0,363.7 200.5,368.5 201.0,359.9 201.5,364.2 202.0,364.6 202.5,367.6 203.0,365.9 203.5,364.3 204.0,366.7 204.5,366.2 205.0,365.6 205.5,365.5 206.0,364.2 206.5,363.6 207.0,365.3 207.5,365.1 208.0,366.4 208.5,365.9 209.0,366.1 209.5,364.6 210.0,366.7 210.5,365.2 211.0,365.9 211.5,363.1 212.0,364.4 212.5,361.8 213.0,362.7 213.5,363.2 214.0,362.9 214.5,364.1 215.0,363.0 215.5,364.7 216.0,364.6 216.5,365.6 217.0,364.7 217.5,364.6 218.0,363.2 218.5,363.9 219.0,363.1 219.5,364.4 220.0,364.9 220.5,363.7 221.0,361.6 221.5,363.0 222.0,362.4 222.5,364.0 223.0,362.7 223.5,365.8 224.0,366.7 224.5,369.4 225.0,366.0 225.5,365.4 226.0,364.1 226.5,364.0 227.0,361.5 227.5,365.9 228.0,364.5 228.5,364.6 229.0,363.6 229.5,364.5 230.0,364.1 230.5,366.3 231.0,366.7 231.5,369.0 232.0,365.7 232.5,366.1 233.0,361.0 233.5,364.4 234.0,364.6 234.5,363.6 235.0,364.2 235.5,364.5 236.0,366.4 236.5,366.1 237.0,363.6 237.5,362.9 238.0,361.1 238.5,363.5 239.0,362.5 239.5,362.2 240.0,361.9 240.5,363.3 241.0,364.3 241.5,365.4 242.0,365.2 242.5,364.6 243.0,363.7 243.5,364.1 244.0,360.8 244.5,362.6 245.0,360.3 245.5,363.3 246.0,364.3 246.5,364.7 247.0,363.1 247.5,362.9 248.0,362.8 248.5,364.6 249.0,367.7 249.5,367.2 250.0,368.0 250.5,365.2 251.0,365.3 251.5,367.9 252.0,368.4 252.5,366.2 253.0,367.3 253.5,363.4 254.0,364.3 254.5,363.6 255.0,367.7 255.5,366.0 256.0,365.3 256.5,367.8 257.0,367.6 257.5,366.6 258.0,368.0 258.5,366.1 259.0,366.8 259.5,365.4 260.0,367.9 260.5,365.0 261.0,365.5 261.5,365.5 262.0,364.9 262.5,363.4 263.0,366.7 263.5,365.2 264.0,365.8 264.5,368.9 265.0,364.4 265.5,365.9 266.0,366.5 266.5,365.2 267.0,364.5 267.5,366.6 268.0,365.7 268.5,367.4 269.0,366.9 269.5,366.6 270.0,368.0 270.5,365.9 271.0,369.4 271.5,368.5 272.0,367.2 272.5,365.8 273.0,368.2 273.5,366.7 274.0,369.4 274.5,369.2 275.0,367.9 275.5,369.7 276.0,368.2 276.5,369.2 277.0,363.9 277.5,368.2 278.0,366.7 278.5,365.8 279.0,365.2 279.5,364.4 280.0,366.1 280.5,365.7 281.0,367.5 281.5,365.6 282.0,364.9 282.5,365.7 283.0,365.7 283.5,365.2 284.0,365.4 284.5,365.6 285.0,367.0 285.5,367.4 286.0,371.1 286.5,366.3 287.0,365.4 287.5,366.3 288.0,366.7 288.5,368.1 289.0,364.7 289.5,365.2 290.0,365.5 290.5,367.3 291.0,364.5 291.5,365.9 292.0,365.7 292.5,365.1 293.0,363.7 293.5,364.6 294.0,368.2 294.5,366.8 295.0,367.7 295.5,366.2 296.0,366.0 296.5,366.7 297.0,366.7 297.5,365.0 298.0,364.6 298.5,364.3 299.0,365.9 299.5,365.3 300.0,366.9 300.5,365.9 301.0,367.3 301.5,367.1 302.0,369.5 302.5,367.8 303.0,364.8 303.5,363.7 304.0,362.7 304.5,365.8 305.0,366.3 305.5,365.7 306.0,366.7 306.5,365.9 307.0,365.1 307.5,366.7 308.0,368.5 308.5,364.9 309.0,366.5 309.5,366.3 310.0,366.7 310.5,367.2 311.0,366.4 311.5,367.4 312.0,365.0 312.5,362.8 313.0,364.8 313.5,364.7 314.0,363.6 314.5,365.8 315.0,365.8 315.5,364.9 316.0,366.1 316.5,365.9 317.0,364.6 317.5,364.8 318.0,365.6 318.5,367.8 319.0,368.0 319.5,363.2 320.0,365.0 320.5,367.9 321.0,366.9 321.5,364.0 322.0,365.5 322.5,367.7 323.0,363.2 323.5,365.5 324.0,367.0 324.5,365.9 325.0,364.8 325.5,364.2 326.0,366.4 326.5,366.2 327.0,364.1 327.5,365.3 328.0,365.3 328.5,365.9 329.0,367.7 329.5,365.2 330.0,363.7 330.5,363.5 331.0,363.6 331.5,364.7 332.0,364.1 332.5,365.2 333.0,364.8 333.5,364.4 334.0,364.7 334.5,362.3 335.0,364.1 335.5,364.6 336.0,363.1 336.5,366.0 337.0,364.8 337.5,365.5 338.0,363.7 338.5,362.9 339.0,363.6 339.5,364.1 340.0,364.3 340.5,366.9 341.0,363.4 341.5,364.2 342.0,363.5 342.5,362.7 343.0,363.9 343.5,363.2 344.0,364.9 344.5,363.2 345.0,363.4 345.5,361.1 346.0,361.9 346.5,364.7 347.0,364.6 347.5,364.6 348.0,360.5 348.5,362.4 349.0,364.3 349.5,364.0 350.0,362.8 350.5,363.8 351.0,364.1 351.5,363.1 352.0,360.2 352.5,359.4 353.0,363.0 353.5,362.2 354.0,361.1 354.5,363.0 355.0,361.6 355.5,360.0 356.0,361.2 356.5,363.4 357.0,363.7 357.5,363.1 358.0,363.2 358.5,363.1 359.0,363.0 359.5,360.3 360.0,362.1 360.5,362.8 361.0,361.5 361.5,360.3 362.0,360.8 362.5,361.4 363.0,361.3 363.5,361.5 364.0,360.4 364.5,361.1 365.0,360.6 365.5,361.9 366.0,360.8 366.5,360.3 367.0,361.3 367.5,358.7 368.0,359.6 368.5,363.6 369.0,363.6 369.5,361.9 370.0,363.1 370.5,359.3 371.0,359.8 371.5,358.5 372.0,361.2 372.5,361.4 373.0,360.3 373.5,361.4 374.0,358.7 374.5,362.1 375.0,361.4 375.5,360.5 376.0,361.2 376.5,361.0 377.0,361.4 377.5,361.7 378.0,361.0 378.5,360.5 379.0,361.9 379.5,359.8 380.0,360.1 380.5,361.4 381.0,358.9 381.5,357.8 382.0,356.9 382.5,355.9 383.0,360.0 383.5,358.0 384.0,359.2 384.5,358.9 385.0,356.0 385.5,359.1 386.0,359.3 386.5,357.3 387.0,357.6 387.5,358.3 388.0,358.2 388.5,357.7 389.0,358.0 389.5,356.5 390.0,354.6 390.5,355.2 391.0,359.4 391.5,358.7 392.0,357.7 392.5,359.3 393.0,360.3 393.5,359.3 394.0,359.1 394.5,359.5 395.0,358.6 395.5,358.1 396.0,357.7 396.5,356.1 397.0,354.5 397.5,358.9 398.0,355.5 398.5,361.2 399.0,359.2 399.5,358.3 400.0,358.7 400.5,361.5 401.0,360.9 401.5,358.8 402.0,357.3 402.5,357.3 403.0,357.1 403.5,357.9 404.0,356.9 404.5,357.0 405.0,359.6 405.5,359.2 406.0,356.2 406.5,356.7 407.0,355.0 407.5,355.6 408.0,358.7 408.5,359.3 409.0,361.0 409.5,359.1 410.0,358.3 410.5,355.0 411.0,358.0 411.5,358.4 412.0,356.7 412.5,357.2 413.0,357.5 413.5,359.0 414.0,358.0 414.5,358.5 415.0,357.3 415.5,356.4 416.0,357.5 416.5,359.4 417.0,361.3 417.5,359.9 418.0,358.7 418.5,357.1 419.0,358.5 419.5,355.5 420.0,356.0 420.5,356.7 421.0,355.8 421.5,359.5 422.0,357.2 422.5,356.6 423.0,356.2 423.5,357.0 424.0,356.7 424.5,356.3 425.0,357.8 425.5,357.4 426.0,355.8 426.5,356.0 427.0,356.4 427.5,356.9 428.0,357.3 428.5,357.8 429.0,354.9 429.5,354.6 430.0,356.3 430.5,357.1 431.0,357.2 431.5,356.4 432.0,356.8 432.5,356.0 433.0,356.8 433.5,355.7 434.0,356.7 434.5,354.5 435.0,354.2 435.5,356.4 436.0,356.8 436.5,357.6 437.0,358.2 437.5,358.0 438.0,355.5 438.5,358.9 439.0,356.9 439.5,359.2 440.0,358.3 440.5,357.9 441.0,358.3 441.5,356.5 442.0,356.8 442.5,355.2 443.0,354.8 443.5,355.4 444.0,357.3 444.5,359.7 445.0,357.3 445.5,359.3 446.0,358.0 446.5,357.1 447.0,356.5 447.5,356.9 448.0,359.1 448.5,360.6 449.0,360.8 449.5,359.5 450.0,358.6 450.5,359.1 451.0,361.1 451.5,359.1 452.0,358.3 452.5,357.3 453.0,359.3 453.5,362.1"/>
</svg>
<div style="left:491px;top:125px;width:139px;height:1px;background:#808080;"></div>
<div style="left:491px;top:125px;width:1px;height:83px;background:#808080;"></div>
<div style="left:492px;top:126px;width:137px;height:1px;background:#fff;"></div>
<div style="left:492px;top:126px;width:1px;height:81px;background:#fff;"></div>
<div style="left:491px;top:208px;width:140px;height:1px;background:#fff;"></div>
<div style="left:630px;top:125px;width:1px;height:84px;background:#fff;"></div>
<div style="left:492px;top:207px;width:138px;height:1px;background:#808080;"></div>
<div style="left:629px;top:126px;width:1px;height:82px;background:#808080;"></div>
<div style="left:498px;top:125px;width:45px;height:2px;background:#d4d0c8;"></div>
<div style="left:491px;top:215px;width:139px;height:1px;background:#808080;"></div>
<div style="left:491px;top:215px;width:1px;height:204px;background:#808080;"></div>
<div style="left:492px;top:216px;width:137px;height:1px;background:#fff;"></div>
<div style="left:492px;top:216px;width:1px;height:202px;background:#fff;"></div>
<div style="left:491px;top:419px;width:140px;height:1px;background:#fff;"></div>
<div style="left:630px;top:215px;width:1px;height:205px;background:#fff;"></div>
<div style="left:492px;top:418px;width:138px;height:1px;background:#808080;"></div>
<div style="left:629px;top:216px;width:1px;height:203px;background:#808080;"></div>
<div style="left:498px;top:215px;width:42px;height:2px;background:#d4d0c8;"></div>
<div style="left:500px;top:225px;width:84px;height:21px;background:#fff;"></div>
<div style="left:500px;top:225px;width:84px;height:1px;background:#808080;"></div>
<div style="left:500px;top:225px;width:1px;height:21px;background:#808080;"></div>
<div style="left:501px;top:226px;width:82px;height:1px;background:#404040;"></div>
<div style="left:501px;top:226px;width:1px;height:19px;background:#404040;"></div>
<div style="left:500px;top:245px;width:84px;height:1px;background:#fff;"></div>
<div style="left:583px;top:225px;width:1px;height:21px;background:#fff;"></div>
<div style="left:501px;top:244px;width:82px;height:1px;background:#d4d0c8;"></div>
<div style="left:582px;top:226px;width:1px;height:19px;background:#d4d0c8;"></div>
<div style="left:566px;top:227px;width:16px;height:17px;background:#d4d0c8;"></div>
<div style="left:566px;top:227px;width:15px;height:1px;background:#fff;"></div>
<div style="left:566px;top:227px;width:1px;height:16px;background:#fff;"></div>
<div style="left:566px;top:243px;width:16px;height:1px;background:#404040;"></div>
<div style="left:581px;top:227px;width:1px;height:17px;background:#404040;"></div>
<div style="left:567px;top:242px;width:14px;height:1px;background:#808080;"></div>
<div style="left:580px;top:228px;width:1px;height:15px;background:#808080;"></div>
<div style="left:570px;top:233px;width:7px;height:1px;background:#000;"></div>
<div style="left:571px;top:234px;width:5px;height:1px;background:#000;"></div>
<div style="left:572px;top:235px;width:3px;height:1px;background:#000;"></div>
<div style="left:573px;top:236px;width:1px;height:1px;background:#000;"></div>
<div style="left:592px;top:224px;width:23px;height:23px;background:#d4d0c8;"></div>
<div style="left:592px;top:224px;width:22px;height:1px;background:#fff;"></div>
<div style="left:592px;top:224px;width:1px;height:22px;background:#fff;"></div>
<div style="left:592px;top:246px;width:23px;height:1px;background:#404040;"></div>
<div style="left:614px;top:224px;width:1px;height:23px;background:#404040;"></div>
<div style="left:593px;top:245px;width:21px;height:1px;background:#808080;"></div>
<div style="left:613px;top:225px;width:1px;height:21px;background:#808080;"></div>
<div style="left:596px;top:227px;width:14px;height:16px;background:#000;"></div>
<div style="left:597px;top:228px;width:12px;height:14px;background:#fff;"></div>
<svg style="left:597px;top:228px" width="12" height="14" viewBox="597 228 12 14">
<path d="M599.5 234.8 V232.6 Q599.5 231.6 600.5 231.6 H603" fill="none" stroke="#008000" stroke-width="1.1"/>
<path d="M602.6 229.2 L605.4 231.6 L602.6 234 Z" fill="#008000"/>
<path d="M606.6 235 V237.4 Q606.6 238.6 605.6 238.6 H603.4" fill="none" stroke="#008000" stroke-width="1.1"/>
<path d="M603.8 236.2 L601 238.6 L603.8 241 Z" fill="#008000"/>
</svg>
<div style="left:554px;top:251px;width:60px;height:19px;background:#fff;"></div>
<div style="left:554px;top:251px;width:60px;height:1px;background:#808080;"></div>
<div style="left:554px;top:251px;width:1px;height:19px;background:#808080;"></div>
<div style="left:555px;top:252px;width:58px;height:1px;background:#404040;"></div>
<div style="left:555px;top:252px;width:1px;height:17px;background:#404040;"></div>
<div style="left:554px;top:269px;width:60px;height:1px;background:#fff;"></div>
<div style="left:613px;top:251px;width:1px;height:19px;background:#fff;"></div>
<div style="left:555px;top:268px;width:58px;height:1px;background:#d4d0c8;"></div>
<div style="left:612px;top:252px;width:1px;height:17px;background:#d4d0c8;"></div>
<div style="left:554px;top:274px;width:60px;height:20px;background:#fff;"></div>
<div style="left:554px;top:274px;width:60px;height:1px;background:#808080;"></div>
<div style="left:554px;top:274px;width:1px;height:20px;background:#808080;"></div>
<div style="left:555px;top:275px;width:58px;height:1px;background:#404040;"></div>
<div style="left:555px;top:275px;width:1px;height:18px;background:#404040;"></div>
<div style="left:554px;top:293px;width:60px;height:1px;background:#fff;"></div>
<div style="left:613px;top:274px;width:1px;height:20px;background:#fff;"></div>
<div style="left:555px;top:292px;width:58px;height:1px;background:#d4d0c8;"></div>
<div style="left:612px;top:275px;width:1px;height:18px;background:#d4d0c8;"></div>
<div style="left:502px;top:296px;width:13px;height:13px;background:#fff;"></div>
<div style="left:502px;top:296px;width:13px;height:1px;background:#808080;"></div>
<div style="left:502px;top:296px;width:1px;height:13px;background:#808080;"></div>
<div style="left:503px;top:297px;width:11px;height:1px;background:#404040;"></div>
<div style="left:503px;top:297px;width:1px;height:11px;background:#404040;"></div>
<div style="left:502px;top:308px;width:13px;height:1px;background:#fff;"></div>
<div style="left:514px;top:296px;width:1px;height:13px;background:#fff;"></div>
<div style="left:503px;top:307px;width:11px;height:1px;background:#d4d0c8;"></div>
<div style="left:513px;top:297px;width:1px;height:11px;background:#d4d0c8;"></div>
<div style="left:502px;top:314px;width:13px;height:13px;background:#fff;"></div>
<div style="left:502px;top:314px;width:13px;height:1px;background:#808080;"></div>
<div style="left:502px;top:314px;width:1px;height:13px;background:#808080;"></div>
<div style="left:503px;top:315px;width:11px;height:1px;background:#404040;"></div>
<div style="left:503px;top:315px;width:1px;height:11px;background:#404040;"></div>
<div style="left:502px;top:326px;width:13px;height:1px;background:#fff;"></div>
<div style="left:514px;top:314px;width:1px;height:13px;background:#fff;"></div>
<div style="left:503px;top:325px;width:11px;height:1px;background:#d4d0c8;"></div>
<div style="left:513px;top:315px;width:1px;height:11px;background:#d4d0c8;"></div>
<div style="left:505px;top:319px;width:1px;height:3px;background:#000;"></div>
<div style="left:506px;top:320px;width:1px;height:3px;background:#000;"></div>
<div style="left:507px;top:321px;width:1px;height:3px;background:#000;"></div>
<div style="left:508px;top:320px;width:1px;height:3px;background:#000;"></div>
<div style="left:509px;top:319px;width:1px;height:3px;background:#000;"></div>
<div style="left:510px;top:318px;width:1px;height:3px;background:#000;"></div>
<div style="left:511px;top:317px;width:1px;height:3px;background:#000;"></div>
<div style="left:502px;top:330px;width:13px;height:13px;background:#fff;"></div>
<div style="left:502px;top:330px;width:13px;height:1px;background:#808080;"></div>
<div style="left:502px;top:330px;width:1px;height:13px;background:#808080;"></div>
<div style="left:503px;top:331px;width:11px;height:1px;background:#404040;"></div>
<div style="left:503px;top:331px;width:1px;height:11px;background:#404040;"></div>
<div style="left:502px;top:342px;width:13px;height:1px;background:#fff;"></div>
<div style="left:514px;top:330px;width:1px;height:13px;background:#fff;"></div>
<div style="left:503px;top:341px;width:11px;height:1px;background:#d4d0c8;"></div>
<div style="left:513px;top:331px;width:1px;height:11px;background:#d4d0c8;"></div>
<div style="left:505px;top:335px;width:1px;height:3px;background:#000;"></div>
<div style="left:506px;top:336px;width:1px;height:3px;background:#000;"></div>
<div style="left:507px;top:337px;width:1px;height:3px;background:#000;"></div>
<div style="left:508px;top:336px;width:1px;height:3px;background:#000;"></div>
<div style="left:509px;top:335px;width:1px;height:3px;background:#000;"></div>
<div style="left:510px;top:334px;width:1px;height:3px;background:#000;"></div>
<div style="left:511px;top:333px;width:1px;height:3px;background:#000;"></div>
<div style="left:502px;top:346px;width:13px;height:13px;background:#fff;"></div>
<div style="left:502px;top:346px;width:13px;height:1px;background:#808080;"></div>
<div style="left:502px;top:346px;width:1px;height:13px;background:#808080;"></div>
<div style="left:503px;top:347px;width:11px;height:1px;background:#404040;"></div>
<div style="left:503px;top:347px;width:1px;height:11px;background:#404040;"></div>
<div style="left:502px;top:358px;width:13px;height:1px;background:#fff;"></div>
<div style="left:514px;top:346px;width:1px;height:13px;background:#fff;"></div>
<div style="left:503px;top:357px;width:11px;height:1px;background:#d4d0c8;"></div>
<div style="left:513px;top:347px;width:1px;height:11px;background:#d4d0c8;"></div>
<div style="left:505px;top:351px;width:1px;height:3px;background:#000;"></div>
<div style="left:506px;top:352px;width:1px;height:3px;background:#000;"></div>
<div style="left:507px;top:353px;width:1px;height:3px;background:#000;"></div>
<div style="left:508px;top:352px;width:1px;height:3px;background:#000;"></div>
<div style="left:509px;top:351px;width:1px;height:3px;background:#000;"></div>
<div style="left:510px;top:350px;width:1px;height:3px;background:#000;"></div>
<div style="left:511px;top:349px;width:1px;height:3px;background:#000;"></div>
<div style="left:502px;top:362px;width:13px;height:13px;background:#fff;"></div>
<div style="left:502px;top:362px;width:13px;height:1px;background:#808080;"></div>
<div style="left:502px;top:362px;width:1px;height:13px;background:#808080;"></div>
<div style="left:503px;top:363px;width:11px;height:1px;background:#404040;"></div>
<div style="left:503px;top:363px;width:1px;height:11px;background:#404040;"></div>
<div style="left:502px;top:374px;width:13px;height:1px;background:#fff;"></div>
<div style="left:514px;top:362px;width:1px;height:13px;background:#fff;"></div>
<div style="left:503px;top:373px;width:11px;height:1px;background:#d4d0c8;"></div>
<div style="left:513px;top:363px;width:1px;height:11px;background:#d4d0c8;"></div>
<div style="left:505px;top:367px;width:1px;height:3px;background:#000;"></div>
<div style="left:506px;top:368px;width:1px;height:3px;background:#000;"></div>
<div style="left:507px;top:369px;width:1px;height:3px;background:#000;"></div>
<div style="left:508px;top:368px;width:1px;height:3px;background:#000;"></div>
<div style="left:509px;top:367px;width:1px;height:3px;background:#000;"></div>
<div style="left:510px;top:366px;width:1px;height:3px;background:#000;"></div>
<div style="left:511px;top:365px;width:1px;height:3px;background:#000;"></div>
<div style="left:502px;top:377px;width:13px;height:13px;background:#d4d0c8;"></div>
<div style="left:502px;top:377px;width:13px;height:1px;background:#808080;"></div>
<div style="left:502px;top:377px;width:1px;height:13px;background:#808080;"></div>
<div style="left:503px;top:378px;width:11px;height:1px;background:#404040;"></div>
<div style="left:503px;top:378px;width:1px;height:11px;background:#404040;"></div>
<div style="left:502px;top:389px;width:13px;height:1px;background:#fff;"></div>
<div style="left:514px;top:377px;width:1px;height:13px;background:#fff;"></div>
<div style="left:503px;top:388px;width:11px;height:1px;background:#d4d0c8;"></div>
<div style="left:513px;top:378px;width:1px;height:11px;background:#d4d0c8;"></div>
<div style="left:505px;top:382px;width:1px;height:3px;background:#808080;"></div>
<div style="left:506px;top:383px;width:1px;height:3px;background:#808080;"></div>
<div style="left:507px;top:384px;width:1px;height:3px;background:#808080;"></div>
<div style="left:508px;top:383px;width:1px;height:3px;background:#808080;"></div>
<div style="left:509px;top:382px;width:1px;height:3px;background:#808080;"></div>
<div style="left:510px;top:381px;width:1px;height:3px;background:#808080;"></div>
<div style="left:511px;top:380px;width:1px;height:3px;background:#808080;"></div>
<div style="left:527px;top:393px;width:98px;height:23px;background:#d4d0c8;"></div>
<div style="left:527px;top:393px;width:97px;height:1px;background:#fff;"></div>
<div style="left:527px;top:393px;width:1px;height:22px;background:#fff;"></div>
<div style="left:527px;top:415px;width:98px;height:1px;background:#404040;"></div>
<div style="left:624px;top:393px;width:1px;height:23px;background:#404040;"></div>
<div style="left:528px;top:414px;width:96px;height:1px;background:#808080;"></div>
<div style="left:623px;top:394px;width:1px;height:21px;background:#808080;"></div>
<div style="left:491px;top:425px;width:139px;height:1px;background:#808080;"></div>
<div style="left:491px;top:425px;width:1px;height:26px;background:#808080;"></div>
<div style="left:492px;top:426px;width:137px;height:1px;background:#fff;"></div>
<div style="left:492px;top:426px;width:1px;height:24px;background:#fff;"></div>
<div style="left:491px;top:451px;width:140px;height:1px;background:#fff;"></div>
<div style="left:630px;top:425px;width:1px;height:27px;background:#fff;"></div>
<div style="left:492px;top:450px;width:138px;height:1px;background:#808080;"></div>
<div style="left:629px;top:426px;width:1px;height:25px;background:#808080;"></div>
<div style="left:491px;top:457px;width:139px;height:1px;background:#808080;"></div>
<div style="left:491px;top:457px;width:1px;height:56px;background:#808080;"></div>
<div style="left:492px;top:458px;width:137px;height:1px;background:#fff;"></div>
<div style="left:492px;top:458px;width:1px;height:54px;background:#fff;"></div>
<div style="left:491px;top:513px;width:140px;height:1px;background:#fff;"></div>
<div style="left:630px;top:457px;width:1px;height:57px;background:#fff;"></div>
<div style="left:492px;top:512px;width:138px;height:1px;background:#808080;"></div>
<div style="left:629px;top:458px;width:1px;height:55px;background:#808080;"></div>
<div style="left:14px;top:457px;width:146px;height:1px;background:#808080;"></div>
<div style="left:14px;top:457px;width:1px;height:57px;background:#808080;"></div>
<div style="left:15px;top:458px;width:144px;height:1px;background:#fff;"></div>
<div style="left:15px;top:458px;width:1px;height:55px;background:#fff;"></div>
<div style="left:14px;top:514px;width:147px;height:1px;background:#fff;"></div>
<div style="left:160px;top:457px;width:1px;height:58px;background:#fff;"></div>
<div style="left:15px;top:513px;width:145px;height:1px;background:#808080;"></div>
<div style="left:159px;top:458px;width:1px;height:56px;background:#808080;"></div>
<div style="left:22px;top:457px;width:55px;height:2px;background:#d4d0c8;"></div>
<div style="left:24px;top:454px;width:8px;height:8px;background:#000;"></div>
<div style="left:25px;top:455px;width:6px;height:6px;background:#00ffff;"></div>
<div style="left:172px;top:457px;width:146px;height:1px;background:#808080;"></div>
<div style="left:172px;top:457px;width:1px;height:57px;background:#808080;"></div>
<div style="left:173px;top:458px;width:144px;height:1px;background:#fff;"></div>
<div style="left:173px;top:458px;width:1px;height:55px;background:#fff;"></div>
<div style="left:172px;top:514px;width:147px;height:1px;background:#fff;"></div>
<div style="left:318px;top:457px;width:1px;height:58px;background:#fff;"></div>
<div style="left:173px;top:513px;width:145px;height:1px;background:#808080;"></div>
<div style="left:317px;top:458px;width:1px;height:56px;background:#808080;"></div>
<div style="left:180px;top:457px;width:64px;height:2px;background:#d4d0c8;"></div>
<div style="left:182px;top:454px;width:8px;height:8px;background:#000;"></div>
<div style="left:183px;top:455px;width:6px;height:6px;background:#ffff00;"></div>
<div style="left:331px;top:457px;width:147px;height:1px;background:#808080;"></div>
<div style="left:331px;top:457px;width:1px;height:43px;background:#808080;"></div>
<div style="left:332px;top:458px;width:145px;height:1px;background:#fff;"></div>
<div style="left:332px;top:458px;width:1px;height:41px;background:#fff;"></div>
<div style="left:331px;top:500px;width:148px;height:1px;background:#fff;"></div>
<div style="left:478px;top:457px;width:1px;height:44px;background:#fff;"></div>
<div style="left:332px;top:499px;width:146px;height:1px;background:#808080;"></div>
<div style="left:477px;top:458px;width:1px;height:42px;background:#808080;"></div>
<div style="left:339px;top:457px;width:37px;height:2px;background:#d4d0c8;"></div>
<div style="left:341px;top:454px;width:8px;height:8px;background:#000;"></div>
<div style="left:342px;top:455px;width:6px;height:6px;background:#ff00ff;"></div>
</div>
<div id="tx">
<span class="t " style="left:24px;top:7px;color:#fff;letter-spacing:0.25px;font-weight:bold;">Nero CD-DVD Speed 4.7.7.16</span>
<span class="t " style="left:10px;top:26px;color:#000;letter-spacing:-0.20px;transform-origin:0 0;transform:scaleX(0.870);">File</span>
<span class="t " style="left:37.7px;top:26px;color:#000;letter-spacing:-0.14px;">Run Test</span>
<span class="t " style="left:92.3px;top:26px;color:#000;letter-spacing:-0.02px;">Extra</span>
<span class="t " style="left:130.3px;top:26px;color:#000;letter-spacing:-0.20px;transform-origin:0 0;transform:scaleX(0.935);">Help</span>
<span class="logo1" style="left:50.5px;top:38.4px">nero</span>
<span class="logo2" style="left:13.6px;top:67.2px;transform:scaleX(1.315)">CD·DVD</span>
<span class="logo2" style="left:95.6px;top:67.2px;transform:scaleX(1.42)">SPEED</span>
<span class="t " style="left:172.3px;top:58px;color:#000;letter-spacing:0.02px;">[0:0]</span>
<span class="t " style="left:205.6px;top:58px;color:#000;letter-spacing:-0.20px;transform-origin:0 0;transform:scaleX(0.917);">BENQ DVD DD DW1640 BSLB</span>
<span class="t " style="left:505.8px;top:57px;color:#000;letter-spacing:0.07px;">Start</span>
<span class="t " style="left:585.5px;top:57px;color:#000;letter-spacing:-0.28px;">Exit</span>
<span class="t " style="left:18.6px;top:97px;color:#000;letter-spacing:-0.37px;">Benchmark</span>
<span class="t " style="left:84.3px;top:97px;color:#000;letter-spacing:-0.25px;">Create Disc</span>
<span class="t " style="left:151.8px;top:97px;color:#000;letter-spacing:-0.22px;">Disc Info</span>
<span class="t " style="left:273.8px;top:97px;color:#000;letter-spacing:-0.18px;">Advanced Disc Quality</span>
<span class="t " style="left:394px;top:97px;color:#000;letter-spacing:-0.27px;">ScanDisc</span>
<span class="t " style="left:451.6px;top:97px;color:#000;letter-spacing:-0.14px;">TA Jitter</span>
<span class="t " style="left:205.7px;top:95px;color:#000;letter-spacing:-0.33px;">Disc Quality</span>
<span class="t " style="left:29.1px;top:124px;color:#000;">10</span>
<span class="t " style="left:35.2px;top:151px;color:#000;">8</span>
<span class="t " style="left:35.2px;top:178px;color:#000;">6</span>
<span class="t " style="left:35.2px;top:204px;color:#000;">4</span>
<span class="t " style="left:35.2px;top:231px;color:#000;">2</span>
<span class="t " style="left:42.4px;top:268px;color:#000;">0.0</span>
<span class="t " style="left:88.4px;top:268px;color:#000;">0.5</span>
<span class="t " style="left:135.4px;top:268px;color:#000;">1.0</span>
<span class="t " style="left:181.4px;top:268px;color:#000;">1.5</span>
<span class="t " style="left:228.4px;top:268px;color:#000;">2.0</span>
<span class="t " style="left:274.4px;top:268px;color:#000;">2.5</span>
<span class="t " style="left:321.4px;top:268px;color:#000;">3.0</span>
<span class="t " style="left:367.4px;top:268px;color:#000;">3.5</span>
<span class="t " style="left:413.4px;top:268px;color:#000;">4.0</span>
<span class="t " style="left:460.4px;top:268px;color:#000;">4.5</span>
<span class="t " style="left:29.1px;top:286px;color:#000;">10</span>
<span class="t " style="left:35.2px;top:313px;color:#000;">8</span>
<span class="t " style="left:35.2px;top:340px;color:#000;">6</span>
<span class="t " style="left:35.2px;top:366px;color:#000;">4</span>
<span class="t " style="left:35.2px;top:393px;color:#000;">2</span>
<span class="t " style="left:42.4px;top:430px;color:#000;">0.0</span>
<span class="t " style="left:88.4px;top:430px;color:#000;">0.5</span>
<span class="t " style="left:135.4px;top:430px;color:#000;">1.0</span>
<span class="t " style="left:181.4px;top:430px;color:#000;">1.5</span>
<span class="t " style="left:228.4px;top:430px;color:#000;">2.0</span>
<span class="t " style="left:274.4px;top:430px;color:#000;">2.5</span>
<span class="t " style="left:321.4px;top:430px;color:#000;">3.0</span>
<span class="t " style="left:367.4px;top:430px;color:#000;">3.5</span>
<span class="t " style="left:413.4px;top:430px;color:#000;">4.0</span>
<span class="t " style="left:460.4px;top:430px;color:#000;">4.5</span>
<span class="t " style="left:471px;top:135px;color:#000;">24</span>
<span class="t " style="left:471px;top:155px;color:#000;">20</span>
<span class="t " style="left:471px;top:175px;color:#000;">16</span>
<span class="t " style="left:471px;top:195px;color:#000;">12</span>
<span class="t " style="left:471px;top:216px;color:#000;">8</span>
<span class="t " style="left:471px;top:236px;color:#000;">4</span>
<span class="t " style="left:471px;top:286px;color:#000;">20</span>
<span class="t " style="left:471px;top:313px;color:#000;">16</span>
<span class="t " style="left:471px;top:339px;color:#000;">12</span>
<span class="t " style="left:471px;top:366px;color:#000;">8</span>
<span class="t " style="left:471px;top:393px;color:#000;">4</span>
<span class="t " style="left:500.5px;top:119px;color:#000;letter-spacing:-0.22px;">Disc info</span>
<span class="t " style="left:499.5px;top:134px;color:#000;letter-spacing:-0.35px;">Type:</span>
<span class="t " style="left:545.2px;top:134px;color:#000080;letter-spacing:-0.20px;transform-origin:0 0;transform:scaleX(0.976);">DVD+R</span>
<span class="t " style="left:499.5px;top:151px;color:#000;letter-spacing:-0.20px;transform-origin:0 0;transform:scaleX(0.879);">ID:</span>
<span class="t " style="left:545.2px;top:151px;color:#000080;letter-spacing:-0.20px;transform-origin:0 0;transform:scaleX(0.961);">MCC 004</span>
<span class="t " style="left:499.5px;top:169px;color:#000;letter-spacing:-0.37px;">Date:</span>
<span class="t " style="left:545.2px;top:169px;color:#000080;letter-spacing:0.70px;">n/a</span>
<span class="t " style="left:499.5px;top:187px;color:#000;letter-spacing:-0.20px;transform-origin:0 0;transform:scaleX(0.942);">Label:</span>
<span class="t " style="left:545.2px;top:187px;color:#000080;letter-spacing:0.70px;">n/a</span>
<span class="t " style="left:500.5px;top:211px;color:#000;letter-spacing:-0.28px;">Settings</span>
<span class="t " style="left:504.3px;top:230px;color:#000;letter-spacing:-0.26px;">8 X</span>
<span class="t " style="left:502.3px;top:256px;color:#000;letter-spacing:-0.20px;transform-origin:0 0;transform:scaleX(0.941);">Start:</span>
<span class="t " style="left:502.3px;top:279px;color:#000;letter-spacing:-0.20px;transform-origin:0 0;transform:scaleX(0.931);">End:</span>
<span class="t " style="left:558px;top:255px;color:#000;letter-spacing:-0.20px;transform-origin:0 0;transform:scaleX(0.969);">0000 MB</span>
<span class="t " style="left:558px;top:278px;color:#000;letter-spacing:-0.20px;transform-origin:0 0;transform:scaleX(0.969);">4480 MB</span>
<span class="t " style="left:520px;top:296px;color:#000;letter-spacing:-0.08px;">Quick scan</span>
<span class="t " style="left:520.7px;top:314px;color:#000;letter-spacing:-0.22px;">Show C1/PIE</span>
<span class="t " style="left:520.7px;top:330px;color:#000;letter-spacing:-0.24px;">Show C2/PIF</span>
<span class="t " style="left:520.7px;top:346px;color:#000;letter-spacing:-0.29px;">Show jitter</span>
<span class="t " style="left:520.7px;top:362px;color:#000;letter-spacing:-0.22px;">Show read speed</span>
<span class="t " style="left:520.7px;top:377px;color:#808080;letter-spacing:-0.23px;text-shadow:1px 1px 0 #fff;">Show write speed</span>
<span class="t " style="left:551.0px;top:398px;color:#000;letter-spacing:0.01px;">Advanced</span>
<span class="t " style="left:502.5px;top:433px;color:#000;letter-spacing:-0.35px;">Quality score:</span>
<span class="t " style="left:608.7px;top:433px;color:#000080;letter-spacing:-0.23px;">98</span>
<span class="t " style="left:502.5px;top:466px;color:#000;letter-spacing:-0.20px;transform-origin:0 0;transform:scaleX(0.939);">Progress:</span>
<span class="t " style="left:592.4px;top:466px;color:#000080;letter-spacing:-0.20px;transform-origin:0 0;transform:scaleX(0.941);">100 %</span>
<span class="t " style="left:502.5px;top:482px;color:#000;letter-spacing:-0.20px;transform-origin:0 0;transform:scaleX(0.958);">Position:</span>
<span class="t " style="left:579.3px;top:482px;color:#000080;letter-spacing:-0.39px;">4479 MB</span>
<span class="t " style="left:502.5px;top:497px;color:#000;letter-spacing:-0.20px;transform-origin:0 0;transform:scaleX(0.960);">Speed:</span>
<span class="t " style="left:590.3px;top:497px;color:#000080;letter-spacing:-0.22px;">8.35 X</span>
<span class="t " style="left:35.6px;top:452px;color:#000;letter-spacing:-0.20px;transform-origin:0 0;transform:scaleX(0.945);">PI Errors</span>
<span class="t " style="left:22.4px;top:467px;color:#000;letter-spacing:-0.32px;">Average:</span>
<span class="t " style="left:129.9px;top:467px;color:#000080;letter-spacing:-0.37px;">0.53</span>
<span class="t " style="left:22.4px;top:482px;color:#000;letter-spacing:-0.20px;transform-origin:0 0;transform:scaleX(0.925);">Maximum:</span>
<span class="t " style="left:144.1px;top:482px;color:#000080;">8</span>
<span class="t " style="left:22.4px;top:497px;color:#000;letter-spacing:-0.10px;">Total:</span>
<span class="t " style="left:127.2px;top:497px;color:#000080;letter-spacing:-0.20px;transform-origin:0 0;transform:scaleX(0.964);">9521</span>
<span class="t " style="left:193.7px;top:452px;color:#000;letter-spacing:-0.20px;transform-origin:0 0;transform:scaleX(0.959);">PI Failures</span>
<span class="t " style="left:181px;top:467px;color:#000;letter-spacing:-0.32px;">Average:</span>
<span class="t " style="left:288.6px;top:467px;color:#000080;letter-spacing:-0.20px;">0.00</span>
<span class="t " style="left:181px;top:482px;color:#000;letter-spacing:-0.20px;transform-origin:0 0;transform:scaleX(0.925);">Maximum:</span>
<span class="t " style="left:303.3px;top:482px;color:#000080;">4</span>
<span class="t " style="left:181px;top:497px;color:#000;letter-spacing:-0.10px;">Total:</span>
<span class="t " style="left:298.2px;top:497px;color:#000080;letter-spacing:-0.20px;transform-origin:0 0;transform:scaleX(0.931);">44</span>
<span class="t " style="left:352.2px;top:452px;color:#000;letter-spacing:-0.39px;">Jitter</span>
<span class="t " style="left:340.5px;top:467px;color:#000;letter-spacing:-0.32px;">Average:</span>
<span class="t " style="left:436.4px;top:467px;color:#000080;letter-spacing:-0.20px;transform-origin:0 0;transform:scaleX(0.951);">9.04 %</span>
<span class="t " style="left:340.5px;top:482px;color:#000;letter-spacing:-0.20px;transform-origin:0 0;transform:scaleX(0.925);">Maximum:</span>
<span class="t " style="left:436.4px;top:482px;color:#000080;letter-spacing:-0.37px;">11.7 %</span>
<span class="t " style="left:340.6px;top:502px;color:#000;letter-spacing:-0.20px;transform-origin:0 0;transform:scaleX(0.954);">PO failures:</span>
<span class="t " style="left:461.9px;top:502px;color:#000080;">0</span>
</div></body></html>
